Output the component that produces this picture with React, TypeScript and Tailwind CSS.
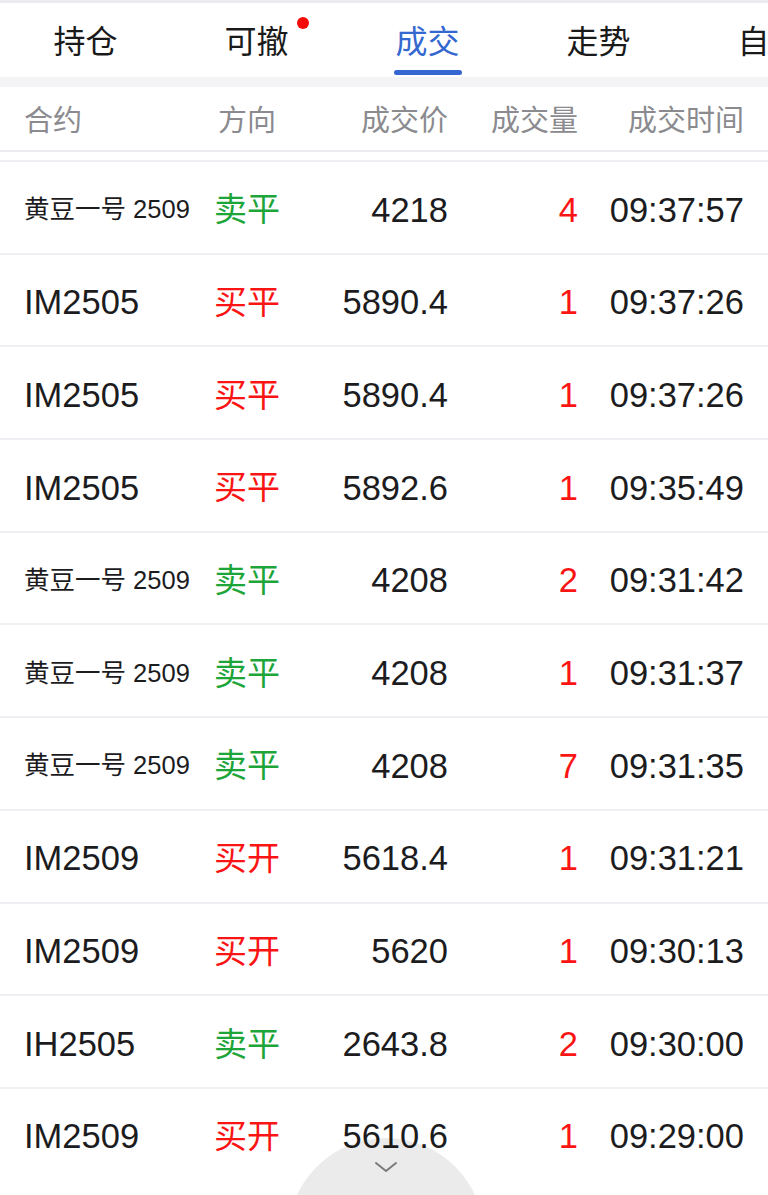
import React from "react";

type Row = { name: string; small?: boolean; dir: string; buy: boolean; price: string; qty: string; time: string };

const rows: Row[] = [
  { name: "黄豆一号 2509", small: true, dir: "卖平", buy: false, price: "4218", qty: "4", time: "09:37:57" },
  { name: "IM2505", dir: "买平", buy: true, price: "5890.4", qty: "1", time: "09:37:26" },
  { name: "IM2505", dir: "买平", buy: true, price: "5890.4", qty: "1", time: "09:37:26" },
  { name: "IM2505", dir: "买平", buy: true, price: "5892.6", qty: "1", time: "09:35:49" },
  { name: "黄豆一号 2509", small: true, dir: "卖平", buy: false, price: "4208", qty: "2", time: "09:31:42" },
  { name: "黄豆一号 2509", small: true, dir: "卖平", buy: false, price: "4208", qty: "1", time: "09:31:37" },
  { name: "黄豆一号 2509", small: true, dir: "卖平", buy: false, price: "4208", qty: "7", time: "09:31:35" },
  { name: "IM2509", dir: "买开", buy: true, price: "5618.4", qty: "1", time: "09:31:21" },
  { name: "IM2509", dir: "买开", buy: true, price: "5620", qty: "1", time: "09:30:13" },
  { name: "IH2505", dir: "卖平", buy: false, price: "2643.8", qty: "2", time: "09:30:00" },
  { name: "IM2509", dir: "买开", buy: true, price: "5610.6", qty: "1", time: "09:29:00" },
];

const tabs = ["持仓", "可撤", "成交", "走势", "自选"];

export default function App() {
  return (
    <div
      className="relative w-[768px] h-[1195px] overflow-hidden bg-white text-[#1c1c1e]"
      style={{ fontFamily: '"Liberation Sans", "Noto Sans CJK SC", sans-serif' }}
    >
      <div className="h-[3px] bg-[#ececf0]" />
      {/* Tabs */}
      <div className="flex h-[74px] overflow-hidden">
        {tabs.map((t, i) => (
          <div key={t} className="relative flex w-[171px] shrink-0 items-center justify-center pt-[4px]">
            <span
              className={`relative text-[32px] leading-none ${i === 2 ? "text-[#3567d0]" : "text-[#1a1a1a]"}`}
            >
              {t}
              {i === 1 && (
                <span className="absolute right-[-20px] top-[-9px] h-[12px] w-[12px] rounded-full bg-[#f50a0a]" />
              )}
            </span>
            {i === 2 && (
              <span className="absolute bottom-[2px] left-[52px] h-[5px] w-[68px] rounded-full bg-[#3567d0]" />
            )}
          </div>
        ))}
      </div>
      <div className="h-[10px] bg-[#f4f4f6]" />
      {/* Header */}
      <div className="flex h-[65px] items-center border-b-2 border-[#ececf0] pt-[6px] text-[29px] text-[#8a8a8f] leading-none">
        <div className="w-[190px] pl-[24px]">合约</div>
        <div className="w-[114px] text-center">方向</div>
        <div className="w-[144px] text-right">成交价</div>
        <div className="w-[130px] text-right">成交量</div>
        <div className="w-[166px] text-right">成交时间</div>
      </div>
      <div className="h-[8px]" />
      {/* Rows */}
      <div>
        {rows.map((r, i) => (
          <div
            key={i}
            className="flex h-[92.7px] items-center border-t-2 border-[#efeff3] pt-[5px] leading-none"
          >
            <div className={`w-[190px] pl-[24px] ${r.small ? "text-[25.5px]" : "text-[34.5px]"} text-[#1c1c1e] whitespace-nowrap`}>
              {r.name}
            </div>
            <div
              className={`w-[114px] text-center text-[33px] ${r.buy ? "text-[#fa1414]" : "text-[#1ea53a]"}`}
            >
              {r.dir}
            </div>
            <div className="w-[144px] text-right text-[34.5px]">{r.price}</div>
            <div className="w-[130px] text-right text-[34.5px] text-[#fa1414]">{r.qty}</div>
            <div className="w-[166px] text-right text-[34.5px]">{r.time}</div>
          </div>
        ))}
      </div>
      {/* bottom pull handle */}
      <div className="absolute left-[288px] top-[1138px] flex h-[196px] w-[196px] justify-center rounded-full bg-black/[0.08]">
        <svg className="mt-[23px]" width="24" height="12" viewBox="0 0 24 12" fill="none">
          <path d="M2 2 L12 10 L22 2" stroke="#7a7a7e" strokeWidth="2" strokeLinecap="round" strokeLinejoin="round" />
        </svg>
      </div>
    </div>
  );
}
